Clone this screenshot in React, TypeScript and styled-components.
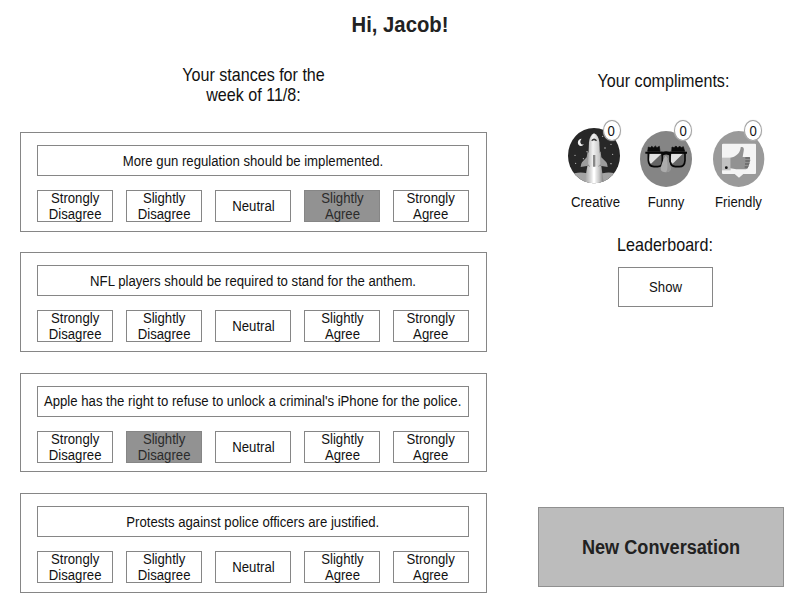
import React from "react";
import styled, { createGlobalStyle } from "styled-components";

const GlobalStyle = createGlobalStyle`
  * { box-sizing: border-box; }
  body {
    margin: 0;
    background: #fff;
    color: #111;
    font: 14.55px/16px "Liberation Sans", Arial, sans-serif;
  }
`;

const Page = styled.main`
  width: 800px;
  height: 600px;
  overflow: hidden;
  display: flex;
  flex-direction: column;
`;

/* Slightly condensed lettering used for every label. */
const Condensed = styled.span<{ $dx?: number; $dy?: number }>`
  display: block;
  flex: none;
  white-space: nowrap;
  text-align: center;
  transform: translate(${(p) => p.$dx ?? 0}px, ${(p) => p.$dy ?? 0}px) scaleX(0.905);
`;

const Title = styled.h1`
  margin: 0;
  height: 65px;
  padding-top: 12px;
  font-size: 22.4px;
  line-height: 26px;
  color: #222;
`;

const Columns = styled.div`
  display: grid;
  grid-template-columns: 467px 256px;
  column-gap: 51px;
  padding-left: 20px;
`;

const Column = styled.section`
  display: flex;
  flex-direction: column;
`;

const Heading = styled.h2<{ $height: number; $top?: number }>`
  margin: 0;
  height: ${(p) => p.$height}px;
  padding-top: ${(p) => p.$top ?? 0}px;
  font-size: 17.8px;
  line-height: 20px;
  font-weight: 400;
`;

const CardList = styled.div`
  display: flex;
  flex-direction: column;
  gap: 20.9px;
`;

const Card = styled.article`
  height: 99.5px;
  padding: 12px 17px 0 16px;
  border: 1px solid #868686;
`;

const Question = styled.div`
  height: 31px;
  margin-bottom: 14px;
  border: 1px solid #868686;
  display: flex;
  align-items: center;
  justify-content: center;
`;

const Options = styled.div`
  display: grid;
  grid-template-columns: repeat(5, 76px);
  column-gap: 13px;
`;

const Option = styled.button<{ $selected: boolean }>`
  height: 32px;
  padding: 0;
  border: 1px solid #868686;
  background: ${(p) => (p.$selected ? "#929292" : "#fff")};
  color: ${(p) => (p.$selected ? "#2b2b2b" : "#111")};
  font: inherit;
  display: flex;
  align-items: center;
  justify-content: center;
`;

const Compliments = styled.div`
  display: flex;
  gap: 4px;
  margin-left: 22px;
`;

const Compliment = styled.div`
  width: 68px;
  height: 123px;
  position: relative;

  svg {
    display: block;
    width: 68px;
    height: 80px;
    margin-bottom: 2px;
  }
`;

const Count = styled.span<{ $left: number }>`
  position: absolute;
  top: 8px;
  left: ${(p) => p.$left}px;
  width: 18px;
  height: 21px;
  border: 1px solid #a3a3a3;
  border-radius: 50%;
  background: #fff;
  box-shadow: 0 0 1px #bbb;
  display: flex;
  align-items: center;
  justify-content: center;
`;

const ShowButton = styled.button`
  width: 95px;
  height: 40px;
  margin-left: 80px;
  padding: 0;
  border: 1px solid #868686;
  background: #fff;
  color: #111;
  font: inherit;
`;

const ConversationButton = styled.button`
  width: 246px;
  height: 80px;
  margin-top: 200px;
  padding: 0;
  border: 1px solid #909090;
  background: #bcbcbc;
  color: #222;
  font: inherit;
  font-size: 20.05px;
  line-height: 24px;
  font-weight: 700;
`;

function RocketIcon() {
  return (
    <svg viewBox="0 0 204 240">
      <defs>
        <clipPath id="rocket-disc">
          <ellipse cx="102" cy="131" rx="78" ry="83" />
        </clipPath>
        <linearGradient id="rocket-hull">
          <stop offset="0" stopColor="#b5b5b5" />
          <stop offset="0.4" stopColor="#f2f2f2" />
          <stop offset="1" stopColor="#c0c0c0" />
        </linearGradient>
        <linearGradient id="rocket-flame">
          <stop offset="0" stopColor="#999" />
          <stop offset="0.25" stopColor="#c9c9c9" />
          <stop offset="0.5" stopColor="#fff" />
          <stop offset="0.75" stopColor="#c9c9c9" />
          <stop offset="1" stopColor="#777" />
        </linearGradient>
      </defs>
      <g clipPath="url(#rocket-disc)">
        <rect x="20" y="45" width="165" height="175" fill="#272727" />
        <path d="M20 193C40 181 65 179 80 184H128C150 178 170 184 185 193V220H20Z" fill="#a4a4a4" />
        <path d="M82 162H124L132 220H72Z" fill="url(#rocket-flame)" />
        <path d="M102 166V220" stroke="#fff" strokeWidth="7" />
        <path d="M83 118L80 136L66 151Q62 157 62 165L85 161L90 166V128ZM122 118L124 136L139 151Q143 157 143 165L120 161L115 166V128Z" fill="#9c9c9c" />
        <path d="M102 64C94 68 88 77 87 91L84 156L90 163H115L121 156L118 91C117 77 111 68 102 64Z" fill="url(#rocket-hull)" />
        <path d="M94 85Q102 74 111 85L108 88Q102 82 96 88Z" fill="#333" />
        <path d="M99 129H106V164H99Z" fill="#888" />
        <path d="M65 80C52 80 49 98 62 102C66 103 69 100 71 97C62 100 57 88 65 80Z" fill="#f4f4f4" />
        <g fill="#d2d2d2">
          <circle cx="81" cy="119" r="1.7" />
          <circle cx="45" cy="130" r="1.7" />
          <circle cx="70" cy="140" r="1.7" />
          <circle cx="47" cy="154" r="1.7" />
          <circle cx="153" cy="97" r="1.7" />
          <circle cx="135" cy="108" r="2" />
          <circle cx="158" cy="127" r="1.7" />
          <circle cx="153" cy="155" r="2" />
          <circle cx="128" cy="73" r="1.7" />
        </g>
      </g>
    </svg>
  );
}

function GlassesIcon() {
  return (
    <svg viewBox="0 0 204 240">
      <ellipse cx="102" cy="141" rx="78" ry="84" fill="#858585" />
      <path d="M49 122H91V148Q91 164 77 164H66Q50 163 49 145ZM114 122H159V145Q158 164 142 164H130Q116 162 114 148Z" fill="#656565" />
      <path d="M53 124H90L57 155Q51 153 51 142ZM118 124H154L122 155Q115 150 116 142Z" fill="#e1e1e1" />
      <path d="M49 122H91V148Q91 164 77 164H66Q50 163 49 145ZM114 122H159V145Q158 164 142 164H130Q116 162 114 148Z" fill="none" stroke="#070707" strokeWidth="5" strokeLinejoin="round" />
      <path d="M40 119H165V125H40ZM89 121Q102 115 116 121V133Q102 122 89 133Z" fill="#070707" />
      <path d="M101 131C94 139 86 163 86 172C87 184 115 184 116 172C117 164 108 137 101 131Z" fill="#acacac" />
      <path d="M104 137C112 149 117 166 115 174Q113 180 102 181Q110 171 104 137Z" fill="#969696" />
      <path d="M47 118L49 105L55 107L59 103L65 107L70 102L75 107L82 103L84 118ZM119 118L120 105L126 107L132 102L137 107L144 103L148 107L154 104L158 118Z" fill="#0b0b0b" stroke="#0b0b0b" strokeWidth="2" />
    </svg>
  );
}

function ThumbIcon() {
  return (
    <svg viewBox="0 0 204 240">
      <ellipse cx="104" cy="141" rx="77" ry="84" fill="#9a9a9a" />
      <path d="M58 95H153Q156 95 156 98V183Q156 186 153 186H118L105 197L92 186H57Q54 186 54 183V98Q54 95 58 95Z" fill="#f4f4f4" />
      <path d="M54 137H80V175H54Z" fill="#c2c2c2" />
      <circle cx="67" cy="167" r="4.2" fill="#141414" />
      <path d="M79 137L88 135C101 129 109 121 110 106C118 103 121 109 119 117L116 135H136Q140 136 138 141Q141 146 137 150Q139 155 135 158Q137 163 132 166Q132 172 125 172H97Q89 171 79 169Z" fill="#929292" />
      <path d="M124 138H138M124 147H137M123 156H135M122 165H132" stroke="#4c4c4c" strokeWidth="2.8" />
    </svg>
  );
}

const compliments = [
  { name: "Creative", Icon: RocketIcon, left: 42.5, labelShift: 1.5 },
  { name: "Funny", Icon: GlassesIcon, left: 42, labelShift: 0 },
  { name: "Friendly", Icon: ThumbIcon, left: 40, labelShift: 0.5 },
];

const scale = [["Strongly", "Disagree"], ["Slightly", "Disagree"], ["Neutral"], ["Slightly", "Agree"], ["Strongly", "Agree"]];

const stances = [
  { text: "More gun regulation should be implemented.", selected: 3 },
  { text: "NFL players should be required to stand for the anthem.", selected: -1 },
  { text: "Apple has the right to refuse to unlock a criminal's iPhone for the police.", selected: 1 },
  { text: "Protests against police officers are justified.", selected: -1 },
];

function StanceCard({ text, selected }: { text: string; selected: number }) {
  return (
    <Card>
      <Question>
        <Condensed $dy={-0.5}>{text}</Condensed>
      </Question>
      <Options>
        {scale.map((words, i) => (
          <Option key={i} $selected={i === selected}>
            <Condensed>
              {words[0]}
              {words[1] && <><br />{words[1]}</>}
            </Condensed>
          </Option>
        ))}
      </Options>
    </Card>
  );
}

export default function App() {
  return (
    <Page>
      <GlobalStyle />
      <Title>
        <Condensed>Hi, Jacob!</Condensed>
      </Title>
      <Columns>
        <Column>
          <Heading $height={67}>
            <Condensed $dy={-0.5}>Your stances for the<br />week of 11/8:</Condensed>
          </Heading>
          <CardList>
            {stances.map((s) => <StanceCard key={s.text} {...s} />)}
          </CardList>
        </Column>
        <Column>
          <Heading $height={47} $top={6}>
            <Condensed $dx={-2.5}>Your compliments:</Condensed>
          </Heading>
          <Compliments>
            {compliments.map(({ name, Icon, left, labelShift }) => (
              <Compliment key={name}>
                <Icon />
                <Count $left={left}><Condensed>0</Condensed></Count>
                <Condensed $dx={labelShift}>{name}</Condensed>
              </Compliment>
            ))}
          </Compliments>
          <Heading $height={32}>
            <Condensed $dx={-1}>Leaderboard:</Condensed>
          </Heading>
          <ShowButton><Condensed>Show</Condensed></ShowButton>
          <ConversationButton><Condensed>New Conversation</Condensed></ConversationButton>
        </Column>
      </Columns>
    </Page>
  );
}
